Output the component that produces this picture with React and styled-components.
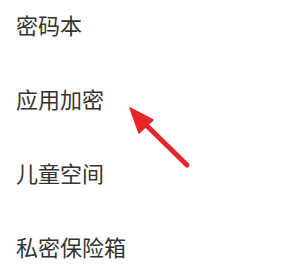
import React from "react";
import styled, { createGlobalStyle } from "styled-components";

const Global = createGlobalStyle`
  html, body { margin: 0; padding: 0; background: #ffffff; }
  body { font-family: "Noto Sans CJK SC", "Noto Sans", sans-serif; }
`;

const Page = styled.div`
  position: relative;
  width: 298px;
  height: 272px;
  overflow: hidden;
  background: #ffffff;
`;

const List = styled.ul`
  list-style: none;
  margin: 0;
  padding: 13px 0 0 16px;
  display: flex;
  flex-direction: column;
  gap: 52px;
`;

const Item = styled.li`
  font-size: 22px;
  line-height: 22px;
  height: 22px;
  color: #333333;
  letter-spacing: 0;
`;

const Arrow = styled.svg`
  position: absolute;
  left: 0;
  top: 0;
  pointer-events: none;
`;

export default function App() {
  const items = ["密码本", "应用加密", "儿童空间", "私密保险箱"];
  return (
    <Page>
      <Global />
      <List>
        {items.map((t) => (
          <Item key={t}>{t}</Item>
        ))}
      </List>
      <Arrow width="298" height="272" viewBox="0 0 298 272">
        <line x1="187" y1="165" x2="142" y2="121" stroke="#e8262a" strokeWidth="5" strokeLinecap="round" />
        <polygon points="130,108 153,120 139,133" fill="#e8262a" stroke="#e8262a" strokeWidth="1.5" strokeLinejoin="round" />
      </Arrow>
    </Page>
  );
}
